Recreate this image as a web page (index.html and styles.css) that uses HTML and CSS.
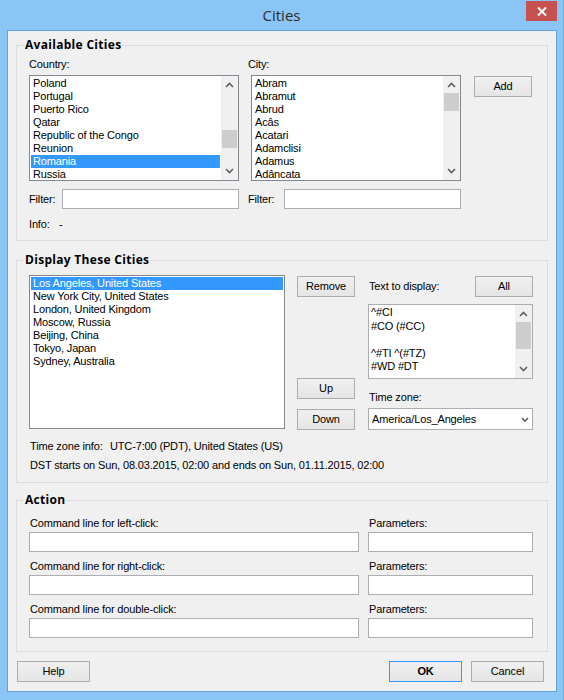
FILE: index.html
```html
<!DOCTYPE html>
<html>
<head>
<meta charset="utf-8">
<title>Cities</title>
<link rel="stylesheet" href="styles.css">
</head>
<body>
<div class="window">
  <div class="titlebar">
    <span class="title">Cities</span>
    <div class="close">
      <svg width="10" height="9" viewBox="0 0 10 9"><path d="M1 0.5 L9 8.5 M9 0.5 L1 8.5" stroke="#fff" stroke-width="2" fill="none"/></svg>
    </div>
  </div>
  <div class="client">
    <div class="group g1">
      <div class="legend">Available Cities</div>
      <div class="g1-cols">
        <div class="col c1">
          <div class="label">Country:</div>
          <div class="listbox lb-small">
            <div class="items">
              <div class="item">Poland</div>
              <div class="item">Portugal</div>
              <div class="item">Puerto Rico</div>
              <div class="item">Qatar</div>
              <div class="item">Republic of the Congo</div>
              <div class="item">Reunion</div>
              <div class="item sel">Romania</div>
              <div class="item">Russia</div>
            </div>
            <div class="scrollbar">
              <div class="sb-btn"><svg width="17" height="17" viewBox="0 0 17 17"><path d="M5 11 L8.5 7.5 L12 11" fill="none" stroke="#606060" stroke-width="1.6"/></svg></div>
              <div class="sb-track"><div class="sb-thumb thumb-country"></div></div>
              <div class="sb-btn"><svg width="17" height="17" viewBox="0 0 17 17"><path d="M5 6 L8.5 9.5 L12 6" fill="none" stroke="#606060" stroke-width="1.6"/></svg></div>
            </div>
          </div>
          <div class="filter-row">
            <span class="label">Filter:</span>
            <div class="edit filter"></div>
          </div>
        </div>
        <div class="col c2">
          <div class="label">City:</div>
          <div class="listbox lb-small lb-city">
            <div class="items">
              <div class="item">Abram</div>
              <div class="item">Abramut</div>
              <div class="item">Abrud</div>
              <div class="item">Acâs</div>
              <div class="item">Acatari</div>
              <div class="item">Adamclisi</div>
              <div class="item">Adamus</div>
              <div class="item">Adâncata</div>
            </div>
            <div class="scrollbar">
              <div class="sb-btn"><svg width="17" height="17" viewBox="0 0 17 17"><path d="M5 11 L8.5 7.5 L12 11" fill="none" stroke="#606060" stroke-width="1.6"/></svg></div>
              <div class="sb-track"><div class="sb-thumb thumb-city"></div></div>
              <div class="sb-btn"><svg width="17" height="17" viewBox="0 0 17 17"><path d="M5 6 L8.5 9.5 L12 6" fill="none" stroke="#606060" stroke-width="1.6"/></svg></div>
            </div>
          </div>
          <div class="filter-row">
            <span class="label">Filter:</span>
            <div class="edit filter"></div>
          </div>
        </div>
        <div class="col c3">
          <div class="btn">Add</div>
        </div>
      </div>
      <div class="info"><span class="info-label">Info:</span><span>-</span></div>
    </div>

    <div class="group g2">
      <div class="legend">Display These Cities</div>
      <div class="g2-row">
        <div class="listbox display-list">
          <div class="items">
            <div class="item sel">Los Angeles, United States</div>
            <div class="item">New York City, United States</div>
            <div class="item">London, United Kingdom</div>
            <div class="item">Moscow, Russia</div>
            <div class="item">Beijing, China</div>
            <div class="item">Tokyo, Japan</div>
            <div class="item">Sydney, Australia</div>
          </div>
        </div>
        <div class="mid">
          <div class="btn">Remove</div>
          <div class="spacer"></div>
          <div class="btn">Up</div>
          <div class="btn btn-down">Down</div>
        </div>
        <div class="right">
          <div class="head-row">
            <span class="label">Text to display:</span>
            <div class="btn btn-all">All</div>
          </div>
          <div class="textedit">
            <div class="text-lines">
              <div class="tline">^#CI</div>
              <div class="tline">#CO (#CC)</div>
              <div class="tline">&nbsp;</div>
              <div class="tline">^#TI ^(#TZ)</div>
              <div class="tline">#WD #DT</div>
            </div>
            <div class="scrollbar">
              <div class="sb-btn"><svg width="17" height="17" viewBox="0 0 17 17"><path d="M5 11 L8.5 7.5 L12 11" fill="none" stroke="#606060" stroke-width="1.6"/></svg></div>
              <div class="sb-track"><div class="sb-thumb thumb-text"></div></div>
              <div class="sb-btn"><svg width="17" height="17" viewBox="0 0 17 17"><path d="M5 6 L8.5 9.5 L12 6" fill="none" stroke="#606060" stroke-width="1.6"/></svg></div>
            </div>
          </div>
          <div class="label tz-label">Time zone:</div>
          <div class="combo">
            <span class="combo-text">America/Los_Angeles</span>
            <svg class="combo-arrow" width="14" height="20" viewBox="0 0 14 20"><path d="M5 9 L8 12 L11 9" fill="none" stroke="#606060" stroke-width="1.6"/></svg>
          </div>
        </div>
      </div>
      <div class="tzinfo"><span class="tz-key">Time zone info:</span><span>UTC-7:00 (PDT), United States (US)</span></div>
      <div class="dst">DST starts on Sun, 08.03.2015, 02:00 and ends on Sun, 01.11.2015, 02:00</div>
    </div>

    <div class="group g3">
      <div class="legend">Action</div>
      <div class="action-row">
        <div class="acol acol-cmd">
          <div class="label">Command line for left-click:</div>
          <div class="edit aedit"></div>
        </div>
        <div class="acol acol-par">
          <div class="label">Parameters:</div>
          <div class="edit aedit"></div>
        </div>
      </div>
      <div class="action-row">
        <div class="acol acol-cmd">
          <div class="label">Command line for right-click:</div>
          <div class="edit aedit"></div>
        </div>
        <div class="acol acol-par">
          <div class="label">Parameters:</div>
          <div class="edit aedit"></div>
        </div>
      </div>
      <div class="action-row">
        <div class="acol acol-cmd">
          <div class="label">Command line for double-click:</div>
          <div class="edit aedit"></div>
        </div>
        <div class="acol acol-par">
          <div class="label">Parameters:</div>
          <div class="edit aedit"></div>
        </div>
      </div>
    </div>

    <div class="footer">
      <div class="btn btn-wide">Help</div>
      <div class="btn btn-wide btn-ok">OK</div>
      <div class="btn btn-wide btn-cancel">Cancel</div>
    </div>
  </div>
</div>
</body>
</html>
```
FILE: styles.css
```css
* { box-sizing: border-box; }
html, body { margin: 0; padding: 0; }
body {
  width: 564px;
  height: 700px;
  overflow: hidden;
  background: #8bc5f6;
  font-family: "Liberation Sans", Arial, sans-serif;
  font-size: 11px;
  line-height: 13px;
  letter-spacing: -0.15px;
  color: #000;
}
.window {
  position: relative;
  width: 564px;
  height: 700px;
  background: #8bc5f6;
  border-right: 1px solid #6fa9df;
}
.titlebar {
  position: relative;
  height: 30px;
  text-align: center;
  font-family: "Open Sans", sans-serif;
  font-size: 15px;
  line-height: 30px;
  letter-spacing: 0;
  color: #2b2b2b;
}
.close {
  position: absolute;
  top: 1px;
  left: 526px;
  width: 31px;
  height: 20px;
  background: #c75050;
  display: flex;
  align-items: center;
  justify-content: center;
}
.close svg { display: block; }
.client {
  margin-left: 7px;
  width: 550px;
  height: 662px;
  border: 1px solid #64a1d9;
  background: #f0f0f0;
  padding-top: 14px;
}
.group {
  position: relative;
  margin: 0 8px;
  border: 1px solid #dcdcdc;
}
.legend {
  position: absolute;
  top: -8px;
  left: 7px;
  padding: 0 1px;
  background: #f0f0f0;
  font-family: "Open Sans", sans-serif;
  font-weight: 700;
  font-size: 12px;
  line-height: 14px;
  letter-spacing: 0.3px;
  color: #000;
}
.label { height: 13px; white-space: nowrap; }

/* group 1 */
.g1 { padding: 12px 0 9px 12px; }
.g1-cols { display: flex; align-items: flex-start; }
.c1 { width: 210px; }
.c2 { width: 213px; margin-left: 9px; }
.c3 { margin-left: 13px; padding-top: 18px; }
.col > .label { margin-bottom: 4px; }
.lb-city { margin-left: 3px; }
.filter-row {
  margin-top: 8px;
  height: 20px;
  display: flex;
  align-items: center;
  justify-content: space-between;
}
.filter { width: 177px; }
.info { margin-top: 9px; height: 13px; }
.info-label { display: inline-block; width: 30px; }

/* controls */
.listbox {
  border: 1px solid #828790;
  background: #fff;
  display: flex;
  overflow: hidden;
}
.lb-small { width: 210px; height: 106px; }
.items { flex: 1; padding: 1px; overflow: hidden; min-width: 0; }
.item { height: 13px; padding-left: 2px; white-space: nowrap; }
.item.sel { background: #3399ff; color: #fff; }
.scrollbar {
  width: 17px;
  flex: none;
  background: #f0f0f0;
  display: flex;
  flex-direction: column;
}
.sb-btn { height: 17px; flex: none; }
.sb-btn svg { display: block; }
.sb-track { flex: 1; }
.sb-thumb { margin: 0 1px; background: #cdcdcd; }
.thumb-country { margin-top: 37px; height: 18px; }
.thumb-city { margin-top: 0; height: 18px; }
.thumb-text { margin-top: 0; height: 27px; }
.edit {
  height: 20px;
  border: 1px solid #abadb3;
  background: #fff;
}
.btn {
  width: 58px;
  height: 21px;
  border: 1px solid #acacac;
  background: linear-gradient(#f0f0f0, #e5e5e5);
  display: flex;
  align-items: center;
  justify-content: center;
  flex: none;
}

/* group 2 */
.g2 { margin-top: 19px; padding: 14px 0 10px 12px; }
.g2-row { display: flex; align-items: flex-start; height: 154px; }
.display-list { width: 256px; height: 154px; }
.mid {
  margin-left: 12px;
  width: 58px;
  height: 155px;
  padding-top: 1px;
  display: flex;
  flex-direction: column;
}
.spacer { flex: 1; }
.btn-down { margin-top: 10px; }
.right { margin-left: 13px; width: 165px; }
.head-row {
  margin-top: 1px;
  height: 21px;
  display: flex;
  align-items: center;
  justify-content: space-between;
  padding-left: 1px;
}
.textedit {
  margin-top: 7px;
  height: 75px;
  border: 1px solid #abadb3;
  background: #fff;
  display: flex;
}
.text-lines { flex: 1; padding: 1px 0 0 2px; overflow: hidden; }
.tline { height: 13.5px; white-space: nowrap; }
.tz-label { margin-top: 12px; padding-left: 1px; }
.combo {
  margin-top: 4px;
  height: 22px;
  border: 1px solid #abadb3;
  background: #fff;
  display: flex;
  align-items: center;
  justify-content: space-between;
  padding-left: 3px;
  padding-right: 1px;
}
.combo-arrow { display: block; }
.tzinfo { margin-top: 11px; height: 13px; padding-left: 1px; }
.tz-key { display: inline-block; width: 80px; }
.dst { margin-top: 6px; height: 13px; padding-left: 1px; white-space: nowrap; }

/* group 3 */
.g3 { margin-top: 17px; padding: 16px 0 13px 12px; }
.action-row { display: flex; }
.action-row + .action-row { margin-top: 8px; }
.acol > .label { padding-left: 1px; }
.acol-cmd { width: 330px; }
.acol-par { width: 165px; margin-left: 9px; }
.aedit { margin-top: 2px; }

/* footer */
.footer {
  margin-top: 9px;
  display: flex;
  padding: 0 12px 0 9px;
}
.btn-wide { width: 73px; }
.btn-ok {
  margin-left: auto;
  border-color: #3399ff;
  font-weight: 700;
}
.btn-cancel { margin-left: 9px; }
```
